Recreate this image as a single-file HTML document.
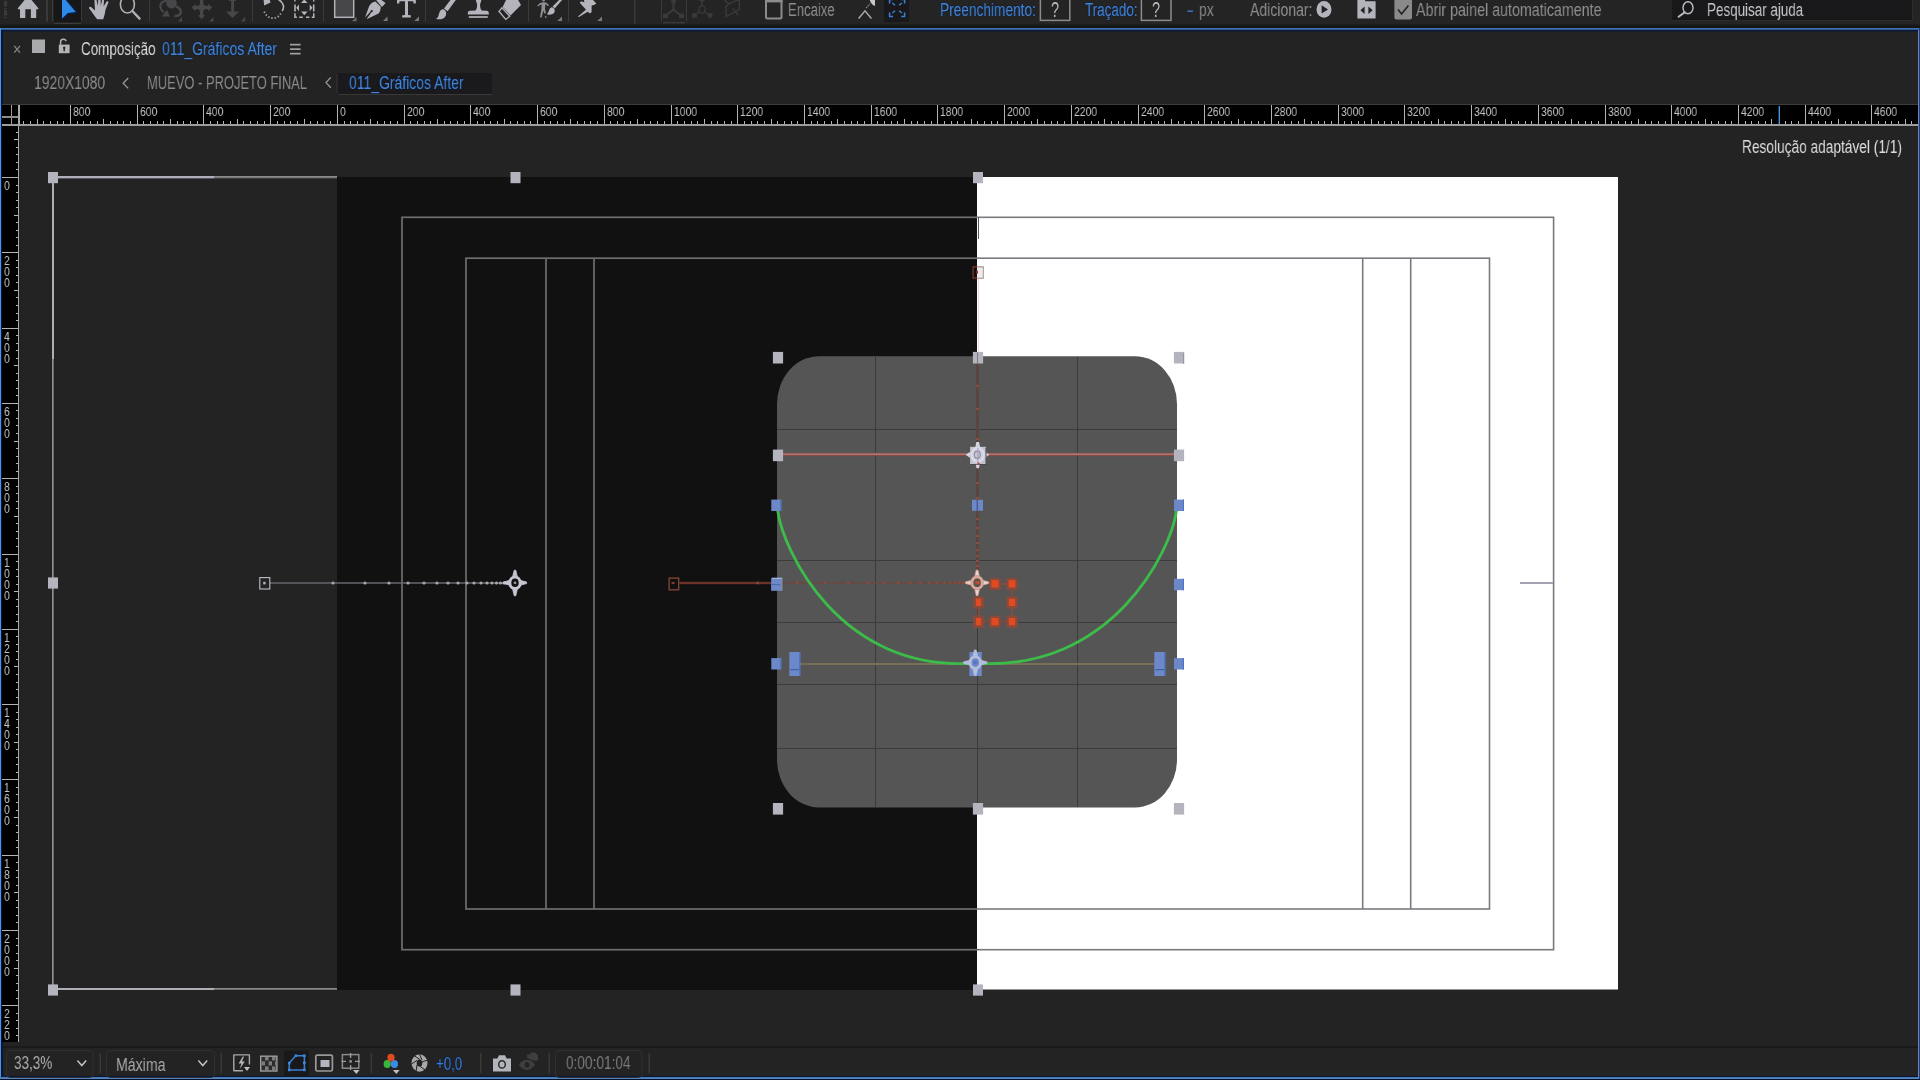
<!DOCTYPE html>
<html>
<head>
<meta charset="utf-8">
<title>After Effects - Composição</title>
<style>
html,body{margin:0;padding:0;}
body{width:1920px;height:1080px;overflow:hidden;background:#232323;position:relative;font-family:"Liberation Sans",sans-serif;}
.abs{position:absolute;}
.t{position:absolute;white-space:nowrap;transform-origin:0 0;line-height:1;letter-spacing:0;will-change:transform;}
svg{position:absolute;left:0;top:0;overflow:visible;}
</style>
</head>
<body>
<!-- toolbar background + panel frame -->
<div class="abs" style="left:0;top:0;width:1920px;height:25px;background:#242424;"></div>
<div class="abs" style="left:0;top:24px;width:1920px;height:4px;background:linear-gradient(#222222,#17181a 35%,#131313);"></div>
<div class="abs" style="left:0;top:28px;width:1920px;height:1052px;background:#232323;"></div>
<!-- blue focus outline -->
<div class="abs" style="left:0;top:28px;width:1920px;height:1px;background:#4272b2;"></div>
<div class="abs" style="left:0;top:29px;width:1920px;height:1px;background:#30588f;"></div>
<div class="abs" style="left:1px;top:30px;width:1917px;height:1px;background:#08193c;"></div>
<div class="abs" style="left:3px;top:31px;width:1915px;height:1px;background:#181d2a;"></div>
<div class="abs" style="left:0;top:28px;width:1px;height:1051px;background:#4d93e8;"></div>
<div class="abs" style="left:1px;top:30px;width:2px;height:1047px;background:#05173a;"></div>
<div class="abs" style="left:1918px;top:30px;width:1px;height:1049px;background:#6684c4;"></div>
<div class="abs" style="left:1919px;top:28px;width:1px;height:1052px;background:#2a3c6c;"></div>
<div class="abs" style="left:1px;top:1076px;width:1917px;height:1px;background:#06183a;"></div>
<div class="abs" style="left:0;top:1077px;width:1919px;height:1px;background:#4a7ab2;"></div>
<div class="abs" style="left:0;top:1078px;width:1919px;height:1px;background:#5585b8;"></div>
<div class="abs" style="left:0;top:1079px;width:1920px;height:1px;background:#041230;"></div>
<!-- rulers -->

<div class="abs" style="left:2px;top:104px;width:1916px;height:1px;background:#3d3d3d;"></div>
<div class="abs" style="left:2px;top:105px;width:1916px;height:19px;background:#000;"></div>
<div class="abs" style="left:2px;top:124px;width:16px;height:918px;background:#000;"></div>
<svg width="1920" height="1080" viewBox="0 0 1920 1080" shape-rendering="crispEdges"><rect x="23" y="121" width="1" height="3" fill="#b4b4b4"/><rect x="30" y="121" width="1" height="3" fill="#b4b4b4"/><rect x="37" y="119" width="1" height="5" fill="#b4b4b4"/><rect x="43" y="121" width="1" height="3" fill="#b4b4b4"/><rect x="50" y="121" width="1" height="3" fill="#b4b4b4"/><rect x="57" y="121" width="1" height="3" fill="#b4b4b4"/><rect x="63" y="121" width="1" height="3" fill="#b4b4b4"/><rect x="70" y="105" width="1" height="19" fill="#b4b4b4"/><rect x="77" y="121" width="1" height="3" fill="#b4b4b4"/><rect x="83" y="121" width="1" height="3" fill="#b4b4b4"/><rect x="90" y="121" width="1" height="3" fill="#b4b4b4"/><rect x="97" y="121" width="1" height="3" fill="#b4b4b4"/><rect x="103" y="119" width="1" height="5" fill="#b4b4b4"/><rect x="110" y="121" width="1" height="3" fill="#b4b4b4"/><rect x="117" y="121" width="1" height="3" fill="#b4b4b4"/><rect x="123" y="121" width="1" height="3" fill="#b4b4b4"/><rect x="130" y="121" width="1" height="3" fill="#b4b4b4"/><rect x="137" y="105" width="1" height="19" fill="#b4b4b4"/><rect x="143" y="121" width="1" height="3" fill="#b4b4b4"/><rect x="150" y="121" width="1" height="3" fill="#b4b4b4"/><rect x="157" y="121" width="1" height="3" fill="#b4b4b4"/><rect x="163" y="121" width="1" height="3" fill="#b4b4b4"/><rect x="170" y="119" width="1" height="5" fill="#b4b4b4"/><rect x="177" y="121" width="1" height="3" fill="#b4b4b4"/><rect x="183" y="121" width="1" height="3" fill="#b4b4b4"/><rect x="190" y="121" width="1" height="3" fill="#b4b4b4"/><rect x="197" y="121" width="1" height="3" fill="#b4b4b4"/><rect x="203" y="105" width="1" height="19" fill="#b4b4b4"/><rect x="210" y="121" width="1" height="3" fill="#b4b4b4"/><rect x="217" y="121" width="1" height="3" fill="#b4b4b4"/><rect x="223" y="121" width="1" height="3" fill="#b4b4b4"/><rect x="230" y="121" width="1" height="3" fill="#b4b4b4"/><rect x="237" y="119" width="1" height="5" fill="#b4b4b4"/><rect x="243" y="121" width="1" height="3" fill="#b4b4b4"/><rect x="250" y="121" width="1" height="3" fill="#b4b4b4"/><rect x="257" y="121" width="1" height="3" fill="#b4b4b4"/><rect x="264" y="121" width="1" height="3" fill="#b4b4b4"/><rect x="270" y="105" width="1" height="19" fill="#b4b4b4"/><rect x="277" y="121" width="1" height="3" fill="#b4b4b4"/><rect x="284" y="121" width="1" height="3" fill="#b4b4b4"/><rect x="290" y="121" width="1" height="3" fill="#b4b4b4"/><rect x="297" y="121" width="1" height="3" fill="#b4b4b4"/><rect x="304" y="119" width="1" height="5" fill="#b4b4b4"/><rect x="310" y="121" width="1" height="3" fill="#b4b4b4"/><rect x="317" y="121" width="1" height="3" fill="#b4b4b4"/><rect x="324" y="121" width="1" height="3" fill="#b4b4b4"/><rect x="330" y="121" width="1" height="3" fill="#b4b4b4"/><rect x="337" y="105" width="1" height="19" fill="#b4b4b4"/><rect x="344" y="121" width="1" height="3" fill="#b4b4b4"/><rect x="350" y="121" width="1" height="3" fill="#b4b4b4"/><rect x="357" y="121" width="1" height="3" fill="#b4b4b4"/><rect x="364" y="121" width="1" height="3" fill="#b4b4b4"/><rect x="370" y="119" width="1" height="5" fill="#b4b4b4"/><rect x="377" y="121" width="1" height="3" fill="#b4b4b4"/><rect x="384" y="121" width="1" height="3" fill="#b4b4b4"/><rect x="390" y="121" width="1" height="3" fill="#b4b4b4"/><rect x="397" y="121" width="1" height="3" fill="#b4b4b4"/><rect x="404" y="105" width="1" height="19" fill="#b4b4b4"/><rect x="410" y="121" width="1" height="3" fill="#b4b4b4"/><rect x="417" y="121" width="1" height="3" fill="#b4b4b4"/><rect x="424" y="121" width="1" height="3" fill="#b4b4b4"/><rect x="430" y="121" width="1" height="3" fill="#b4b4b4"/><rect x="437" y="119" width="1" height="5" fill="#b4b4b4"/><rect x="444" y="121" width="1" height="3" fill="#b4b4b4"/><rect x="450" y="121" width="1" height="3" fill="#b4b4b4"/><rect x="457" y="121" width="1" height="3" fill="#b4b4b4"/><rect x="464" y="121" width="1" height="3" fill="#b4b4b4"/><rect x="470" y="105" width="1" height="19" fill="#b4b4b4"/><rect x="477" y="121" width="1" height="3" fill="#b4b4b4"/><rect x="484" y="121" width="1" height="3" fill="#b4b4b4"/><rect x="490" y="121" width="1" height="3" fill="#b4b4b4"/><rect x="497" y="121" width="1" height="3" fill="#b4b4b4"/><rect x="504" y="119" width="1" height="5" fill="#b4b4b4"/><rect x="510" y="121" width="1" height="3" fill="#b4b4b4"/><rect x="517" y="121" width="1" height="3" fill="#b4b4b4"/><rect x="524" y="121" width="1" height="3" fill="#b4b4b4"/><rect x="530" y="121" width="1" height="3" fill="#b4b4b4"/><rect x="537" y="105" width="1" height="19" fill="#b4b4b4"/><rect x="544" y="121" width="1" height="3" fill="#b4b4b4"/><rect x="550" y="121" width="1" height="3" fill="#b4b4b4"/><rect x="557" y="121" width="1" height="3" fill="#b4b4b4"/><rect x="564" y="121" width="1" height="3" fill="#b4b4b4"/><rect x="570" y="119" width="1" height="5" fill="#b4b4b4"/><rect x="577" y="121" width="1" height="3" fill="#b4b4b4"/><rect x="584" y="121" width="1" height="3" fill="#b4b4b4"/><rect x="590" y="121" width="1" height="3" fill="#b4b4b4"/><rect x="597" y="121" width="1" height="3" fill="#b4b4b4"/><rect x="604" y="105" width="1" height="19" fill="#b4b4b4"/><rect x="610" y="121" width="1" height="3" fill="#b4b4b4"/><rect x="617" y="121" width="1" height="3" fill="#b4b4b4"/><rect x="624" y="121" width="1" height="3" fill="#b4b4b4"/><rect x="630" y="121" width="1" height="3" fill="#b4b4b4"/><rect x="637" y="119" width="1" height="5" fill="#b4b4b4"/><rect x="644" y="121" width="1" height="3" fill="#b4b4b4"/><rect x="650" y="121" width="1" height="3" fill="#b4b4b4"/><rect x="657" y="121" width="1" height="3" fill="#b4b4b4"/><rect x="664" y="121" width="1" height="3" fill="#b4b4b4"/><rect x="671" y="105" width="1" height="19" fill="#b4b4b4"/><rect x="677" y="121" width="1" height="3" fill="#b4b4b4"/><rect x="684" y="121" width="1" height="3" fill="#b4b4b4"/><rect x="691" y="121" width="1" height="3" fill="#b4b4b4"/><rect x="697" y="121" width="1" height="3" fill="#b4b4b4"/><rect x="704" y="119" width="1" height="5" fill="#b4b4b4"/><rect x="711" y="121" width="1" height="3" fill="#b4b4b4"/><rect x="717" y="121" width="1" height="3" fill="#b4b4b4"/><rect x="724" y="121" width="1" height="3" fill="#b4b4b4"/><rect x="731" y="121" width="1" height="3" fill="#b4b4b4"/><rect x="737" y="105" width="1" height="19" fill="#b4b4b4"/><rect x="744" y="121" width="1" height="3" fill="#b4b4b4"/><rect x="751" y="121" width="1" height="3" fill="#b4b4b4"/><rect x="757" y="121" width="1" height="3" fill="#b4b4b4"/><rect x="764" y="121" width="1" height="3" fill="#b4b4b4"/><rect x="771" y="119" width="1" height="5" fill="#b4b4b4"/><rect x="777" y="121" width="1" height="3" fill="#b4b4b4"/><rect x="784" y="121" width="1" height="3" fill="#b4b4b4"/><rect x="791" y="121" width="1" height="3" fill="#b4b4b4"/><rect x="797" y="121" width="1" height="3" fill="#b4b4b4"/><rect x="804" y="105" width="1" height="19" fill="#b4b4b4"/><rect x="811" y="121" width="1" height="3" fill="#b4b4b4"/><rect x="817" y="121" width="1" height="3" fill="#b4b4b4"/><rect x="824" y="121" width="1" height="3" fill="#b4b4b4"/><rect x="831" y="121" width="1" height="3" fill="#b4b4b4"/><rect x="837" y="119" width="1" height="5" fill="#b4b4b4"/><rect x="844" y="121" width="1" height="3" fill="#b4b4b4"/><rect x="851" y="121" width="1" height="3" fill="#b4b4b4"/><rect x="857" y="121" width="1" height="3" fill="#b4b4b4"/><rect x="864" y="121" width="1" height="3" fill="#b4b4b4"/><rect x="871" y="105" width="1" height="19" fill="#b4b4b4"/><rect x="877" y="121" width="1" height="3" fill="#b4b4b4"/><rect x="884" y="121" width="1" height="3" fill="#b4b4b4"/><rect x="891" y="121" width="1" height="3" fill="#b4b4b4"/><rect x="897" y="121" width="1" height="3" fill="#b4b4b4"/><rect x="904" y="119" width="1" height="5" fill="#b4b4b4"/><rect x="911" y="121" width="1" height="3" fill="#b4b4b4"/><rect x="917" y="121" width="1" height="3" fill="#b4b4b4"/><rect x="924" y="121" width="1" height="3" fill="#b4b4b4"/><rect x="931" y="121" width="1" height="3" fill="#b4b4b4"/><rect x="937" y="105" width="1" height="19" fill="#b4b4b4"/><rect x="944" y="121" width="1" height="3" fill="#b4b4b4"/><rect x="951" y="121" width="1" height="3" fill="#b4b4b4"/><rect x="957" y="121" width="1" height="3" fill="#b4b4b4"/><rect x="964" y="121" width="1" height="3" fill="#b4b4b4"/><rect x="971" y="119" width="1" height="5" fill="#b4b4b4"/><rect x="977" y="121" width="1" height="3" fill="#b4b4b4"/><rect x="984" y="121" width="1" height="3" fill="#b4b4b4"/><rect x="991" y="121" width="1" height="3" fill="#b4b4b4"/><rect x="997" y="121" width="1" height="3" fill="#b4b4b4"/><rect x="1004" y="105" width="1" height="19" fill="#b4b4b4"/><rect x="1011" y="121" width="1" height="3" fill="#b4b4b4"/><rect x="1017" y="121" width="1" height="3" fill="#b4b4b4"/><rect x="1024" y="121" width="1" height="3" fill="#b4b4b4"/><rect x="1031" y="121" width="1" height="3" fill="#b4b4b4"/><rect x="1037" y="119" width="1" height="5" fill="#b4b4b4"/><rect x="1044" y="121" width="1" height="3" fill="#b4b4b4"/><rect x="1051" y="121" width="1" height="3" fill="#b4b4b4"/><rect x="1057" y="121" width="1" height="3" fill="#b4b4b4"/><rect x="1064" y="121" width="1" height="3" fill="#b4b4b4"/><rect x="1071" y="105" width="1" height="19" fill="#b4b4b4"/><rect x="1077" y="121" width="1" height="3" fill="#b4b4b4"/><rect x="1084" y="121" width="1" height="3" fill="#b4b4b4"/><rect x="1091" y="121" width="1" height="3" fill="#b4b4b4"/><rect x="1098" y="121" width="1" height="3" fill="#b4b4b4"/><rect x="1104" y="119" width="1" height="5" fill="#b4b4b4"/><rect x="1111" y="121" width="1" height="3" fill="#b4b4b4"/><rect x="1118" y="121" width="1" height="3" fill="#b4b4b4"/><rect x="1124" y="121" width="1" height="3" fill="#b4b4b4"/><rect x="1131" y="121" width="1" height="3" fill="#b4b4b4"/><rect x="1138" y="105" width="1" height="19" fill="#b4b4b4"/><rect x="1144" y="121" width="1" height="3" fill="#b4b4b4"/><rect x="1151" y="121" width="1" height="3" fill="#b4b4b4"/><rect x="1158" y="121" width="1" height="3" fill="#b4b4b4"/><rect x="1164" y="121" width="1" height="3" fill="#b4b4b4"/><rect x="1171" y="119" width="1" height="5" fill="#b4b4b4"/><rect x="1178" y="121" width="1" height="3" fill="#b4b4b4"/><rect x="1184" y="121" width="1" height="3" fill="#b4b4b4"/><rect x="1191" y="121" width="1" height="3" fill="#b4b4b4"/><rect x="1198" y="121" width="1" height="3" fill="#b4b4b4"/><rect x="1204" y="105" width="1" height="19" fill="#b4b4b4"/><rect x="1211" y="121" width="1" height="3" fill="#b4b4b4"/><rect x="1218" y="121" width="1" height="3" fill="#b4b4b4"/><rect x="1224" y="121" width="1" height="3" fill="#b4b4b4"/><rect x="1231" y="121" width="1" height="3" fill="#b4b4b4"/><rect x="1238" y="119" width="1" height="5" fill="#b4b4b4"/><rect x="1244" y="121" width="1" height="3" fill="#b4b4b4"/><rect x="1251" y="121" width="1" height="3" fill="#b4b4b4"/><rect x="1258" y="121" width="1" height="3" fill="#b4b4b4"/><rect x="1264" y="121" width="1" height="3" fill="#b4b4b4"/><rect x="1271" y="105" width="1" height="19" fill="#b4b4b4"/><rect x="1278" y="121" width="1" height="3" fill="#b4b4b4"/><rect x="1284" y="121" width="1" height="3" fill="#b4b4b4"/><rect x="1291" y="121" width="1" height="3" fill="#b4b4b4"/><rect x="1298" y="121" width="1" height="3" fill="#b4b4b4"/><rect x="1304" y="119" width="1" height="5" fill="#b4b4b4"/><rect x="1311" y="121" width="1" height="3" fill="#b4b4b4"/><rect x="1318" y="121" width="1" height="3" fill="#b4b4b4"/><rect x="1324" y="121" width="1" height="3" fill="#b4b4b4"/><rect x="1331" y="121" width="1" height="3" fill="#b4b4b4"/><rect x="1338" y="105" width="1" height="19" fill="#b4b4b4"/><rect x="1344" y="121" width="1" height="3" fill="#b4b4b4"/><rect x="1351" y="121" width="1" height="3" fill="#b4b4b4"/><rect x="1358" y="121" width="1" height="3" fill="#b4b4b4"/><rect x="1364" y="121" width="1" height="3" fill="#b4b4b4"/><rect x="1371" y="119" width="1" height="5" fill="#b4b4b4"/><rect x="1378" y="121" width="1" height="3" fill="#b4b4b4"/><rect x="1384" y="121" width="1" height="3" fill="#b4b4b4"/><rect x="1391" y="121" width="1" height="3" fill="#b4b4b4"/><rect x="1398" y="121" width="1" height="3" fill="#b4b4b4"/><rect x="1404" y="105" width="1" height="19" fill="#b4b4b4"/><rect x="1411" y="121" width="1" height="3" fill="#b4b4b4"/><rect x="1418" y="121" width="1" height="3" fill="#b4b4b4"/><rect x="1424" y="121" width="1" height="3" fill="#b4b4b4"/><rect x="1431" y="121" width="1" height="3" fill="#b4b4b4"/><rect x="1438" y="119" width="1" height="5" fill="#b4b4b4"/><rect x="1444" y="121" width="1" height="3" fill="#b4b4b4"/><rect x="1451" y="121" width="1" height="3" fill="#b4b4b4"/><rect x="1458" y="121" width="1" height="3" fill="#b4b4b4"/><rect x="1464" y="121" width="1" height="3" fill="#b4b4b4"/><rect x="1471" y="105" width="1" height="19" fill="#b4b4b4"/><rect x="1478" y="121" width="1" height="3" fill="#b4b4b4"/><rect x="1484" y="121" width="1" height="3" fill="#b4b4b4"/><rect x="1491" y="121" width="1" height="3" fill="#b4b4b4"/><rect x="1498" y="121" width="1" height="3" fill="#b4b4b4"/><rect x="1505" y="119" width="1" height="5" fill="#b4b4b4"/><rect x="1511" y="121" width="1" height="3" fill="#b4b4b4"/><rect x="1518" y="121" width="1" height="3" fill="#b4b4b4"/><rect x="1525" y="121" width="1" height="3" fill="#b4b4b4"/><rect x="1531" y="121" width="1" height="3" fill="#b4b4b4"/><rect x="1538" y="105" width="1" height="19" fill="#b4b4b4"/><rect x="1545" y="121" width="1" height="3" fill="#b4b4b4"/><rect x="1551" y="121" width="1" height="3" fill="#b4b4b4"/><rect x="1558" y="121" width="1" height="3" fill="#b4b4b4"/><rect x="1565" y="121" width="1" height="3" fill="#b4b4b4"/><rect x="1571" y="119" width="1" height="5" fill="#b4b4b4"/><rect x="1578" y="121" width="1" height="3" fill="#b4b4b4"/><rect x="1585" y="121" width="1" height="3" fill="#b4b4b4"/><rect x="1591" y="121" width="1" height="3" fill="#b4b4b4"/><rect x="1598" y="121" width="1" height="3" fill="#b4b4b4"/><rect x="1605" y="105" width="1" height="19" fill="#b4b4b4"/><rect x="1611" y="121" width="1" height="3" fill="#b4b4b4"/><rect x="1618" y="121" width="1" height="3" fill="#b4b4b4"/><rect x="1625" y="121" width="1" height="3" fill="#b4b4b4"/><rect x="1631" y="121" width="1" height="3" fill="#b4b4b4"/><rect x="1638" y="119" width="1" height="5" fill="#b4b4b4"/><rect x="1645" y="121" width="1" height="3" fill="#b4b4b4"/><rect x="1651" y="121" width="1" height="3" fill="#b4b4b4"/><rect x="1658" y="121" width="1" height="3" fill="#b4b4b4"/><rect x="1665" y="121" width="1" height="3" fill="#b4b4b4"/><rect x="1671" y="105" width="1" height="19" fill="#b4b4b4"/><rect x="1678" y="121" width="1" height="3" fill="#b4b4b4"/><rect x="1685" y="121" width="1" height="3" fill="#b4b4b4"/><rect x="1691" y="121" width="1" height="3" fill="#b4b4b4"/><rect x="1698" y="121" width="1" height="3" fill="#b4b4b4"/><rect x="1705" y="119" width="1" height="5" fill="#b4b4b4"/><rect x="1711" y="121" width="1" height="3" fill="#b4b4b4"/><rect x="1718" y="121" width="1" height="3" fill="#b4b4b4"/><rect x="1725" y="121" width="1" height="3" fill="#b4b4b4"/><rect x="1731" y="121" width="1" height="3" fill="#b4b4b4"/><rect x="1738" y="105" width="1" height="19" fill="#b4b4b4"/><rect x="1745" y="121" width="1" height="3" fill="#b4b4b4"/><rect x="1751" y="121" width="1" height="3" fill="#b4b4b4"/><rect x="1758" y="121" width="1" height="3" fill="#b4b4b4"/><rect x="1765" y="121" width="1" height="3" fill="#b4b4b4"/><rect x="1771" y="119" width="1" height="5" fill="#b4b4b4"/><rect x="1778" y="121" width="1" height="3" fill="#b4b4b4"/><rect x="1785" y="121" width="1" height="3" fill="#b4b4b4"/><rect x="1791" y="121" width="1" height="3" fill="#b4b4b4"/><rect x="1798" y="121" width="1" height="3" fill="#b4b4b4"/><rect x="1805" y="105" width="1" height="19" fill="#b4b4b4"/><rect x="1811" y="121" width="1" height="3" fill="#b4b4b4"/><rect x="1818" y="121" width="1" height="3" fill="#b4b4b4"/><rect x="1825" y="121" width="1" height="3" fill="#b4b4b4"/><rect x="1831" y="121" width="1" height="3" fill="#b4b4b4"/><rect x="1838" y="119" width="1" height="5" fill="#b4b4b4"/><rect x="1845" y="121" width="1" height="3" fill="#b4b4b4"/><rect x="1851" y="121" width="1" height="3" fill="#b4b4b4"/><rect x="1858" y="121" width="1" height="3" fill="#b4b4b4"/><rect x="1865" y="121" width="1" height="3" fill="#b4b4b4"/><rect x="1871" y="105" width="1" height="19" fill="#b4b4b4"/><rect x="1878" y="121" width="1" height="3" fill="#b4b4b4"/><rect x="1885" y="121" width="1" height="3" fill="#b4b4b4"/><rect x="1891" y="121" width="1" height="3" fill="#b4b4b4"/><rect x="1898" y="121" width="1" height="3" fill="#b4b4b4"/><rect x="1905" y="119" width="1" height="5" fill="#b4b4b4"/><rect x="1911" y="121" width="1" height="3" fill="#b4b4b4"/><rect x="2" y="124" width="1916" height="2" fill="#9c9c9c"/><rect x="18" y="105" width="2" height="21" fill="#a8a8a8"/><rect x="11" y="105" width="1" height="19" fill="#9c9c9c"/><rect x="2" y="116" width="16" height="2" fill="#8c8c8c"/><rect x="16" y="132" width="2" height="1" fill="#b4b4b4"/><rect x="14" y="139" width="4" height="1" fill="#b4b4b4"/><rect x="16" y="147" width="2" height="1" fill="#b4b4b4"/><rect x="16" y="154" width="2" height="1" fill="#b4b4b4"/><rect x="16" y="162" width="2" height="1" fill="#b4b4b4"/><rect x="16" y="169" width="2" height="1" fill="#b4b4b4"/><rect x="2" y="177" width="16" height="1" fill="#b4b4b4"/><rect x="16" y="185" width="2" height="1" fill="#b4b4b4"/><rect x="16" y="192" width="2" height="1" fill="#b4b4b4"/><rect x="16" y="200" width="2" height="1" fill="#b4b4b4"/><rect x="16" y="207" width="2" height="1" fill="#b4b4b4"/><rect x="14" y="215" width="4" height="1" fill="#b4b4b4"/><rect x="16" y="222" width="2" height="1" fill="#b4b4b4"/><rect x="16" y="230" width="2" height="1" fill="#b4b4b4"/><rect x="16" y="237" width="2" height="1" fill="#b4b4b4"/><rect x="16" y="245" width="2" height="1" fill="#b4b4b4"/><rect x="2" y="252" width="16" height="1" fill="#b4b4b4"/><rect x="16" y="260" width="2" height="1" fill="#b4b4b4"/><rect x="16" y="267" width="2" height="1" fill="#b4b4b4"/><rect x="16" y="275" width="2" height="1" fill="#b4b4b4"/><rect x="16" y="282" width="2" height="1" fill="#b4b4b4"/><rect x="14" y="290" width="4" height="1" fill="#b4b4b4"/><rect x="16" y="297" width="2" height="1" fill="#b4b4b4"/><rect x="16" y="305" width="2" height="1" fill="#b4b4b4"/><rect x="16" y="313" width="2" height="1" fill="#b4b4b4"/><rect x="16" y="320" width="2" height="1" fill="#b4b4b4"/><rect x="2" y="328" width="16" height="1" fill="#b4b4b4"/><rect x="16" y="335" width="2" height="1" fill="#b4b4b4"/><rect x="16" y="343" width="2" height="1" fill="#b4b4b4"/><rect x="16" y="350" width="2" height="1" fill="#b4b4b4"/><rect x="16" y="358" width="2" height="1" fill="#b4b4b4"/><rect x="14" y="365" width="4" height="1" fill="#b4b4b4"/><rect x="16" y="373" width="2" height="1" fill="#b4b4b4"/><rect x="16" y="380" width="2" height="1" fill="#b4b4b4"/><rect x="16" y="388" width="2" height="1" fill="#b4b4b4"/><rect x="16" y="395" width="2" height="1" fill="#b4b4b4"/><rect x="2" y="403" width="16" height="1" fill="#b4b4b4"/><rect x="16" y="410" width="2" height="1" fill="#b4b4b4"/><rect x="16" y="418" width="2" height="1" fill="#b4b4b4"/><rect x="16" y="425" width="2" height="1" fill="#b4b4b4"/><rect x="16" y="433" width="2" height="1" fill="#b4b4b4"/><rect x="14" y="441" width="4" height="1" fill="#b4b4b4"/><rect x="16" y="448" width="2" height="1" fill="#b4b4b4"/><rect x="16" y="456" width="2" height="1" fill="#b4b4b4"/><rect x="16" y="463" width="2" height="1" fill="#b4b4b4"/><rect x="16" y="471" width="2" height="1" fill="#b4b4b4"/><rect x="2" y="478" width="16" height="1" fill="#b4b4b4"/><rect x="16" y="486" width="2" height="1" fill="#b4b4b4"/><rect x="16" y="493" width="2" height="1" fill="#b4b4b4"/><rect x="16" y="501" width="2" height="1" fill="#b4b4b4"/><rect x="16" y="508" width="2" height="1" fill="#b4b4b4"/><rect x="14" y="516" width="4" height="1" fill="#b4b4b4"/><rect x="16" y="523" width="2" height="1" fill="#b4b4b4"/><rect x="16" y="531" width="2" height="1" fill="#b4b4b4"/><rect x="16" y="538" width="2" height="1" fill="#b4b4b4"/><rect x="16" y="546" width="2" height="1" fill="#b4b4b4"/><rect x="2" y="554" width="16" height="1" fill="#b4b4b4"/><rect x="16" y="561" width="2" height="1" fill="#b4b4b4"/><rect x="16" y="569" width="2" height="1" fill="#b4b4b4"/><rect x="16" y="576" width="2" height="1" fill="#b4b4b4"/><rect x="16" y="584" width="2" height="1" fill="#b4b4b4"/><rect x="14" y="591" width="4" height="1" fill="#b4b4b4"/><rect x="16" y="599" width="2" height="1" fill="#b4b4b4"/><rect x="16" y="606" width="2" height="1" fill="#b4b4b4"/><rect x="16" y="614" width="2" height="1" fill="#b4b4b4"/><rect x="16" y="621" width="2" height="1" fill="#b4b4b4"/><rect x="2" y="629" width="16" height="1" fill="#b4b4b4"/><rect x="16" y="636" width="2" height="1" fill="#b4b4b4"/><rect x="16" y="644" width="2" height="1" fill="#b4b4b4"/><rect x="16" y="651" width="2" height="1" fill="#b4b4b4"/><rect x="16" y="659" width="2" height="1" fill="#b4b4b4"/><rect x="14" y="666" width="4" height="1" fill="#b4b4b4"/><rect x="16" y="674" width="2" height="1" fill="#b4b4b4"/><rect x="16" y="682" width="2" height="1" fill="#b4b4b4"/><rect x="16" y="689" width="2" height="1" fill="#b4b4b4"/><rect x="16" y="697" width="2" height="1" fill="#b4b4b4"/><rect x="2" y="704" width="16" height="1" fill="#b4b4b4"/><rect x="16" y="712" width="2" height="1" fill="#b4b4b4"/><rect x="16" y="719" width="2" height="1" fill="#b4b4b4"/><rect x="16" y="727" width="2" height="1" fill="#b4b4b4"/><rect x="16" y="734" width="2" height="1" fill="#b4b4b4"/><rect x="14" y="742" width="4" height="1" fill="#b4b4b4"/><rect x="16" y="749" width="2" height="1" fill="#b4b4b4"/><rect x="16" y="757" width="2" height="1" fill="#b4b4b4"/><rect x="16" y="764" width="2" height="1" fill="#b4b4b4"/><rect x="16" y="772" width="2" height="1" fill="#b4b4b4"/><rect x="2" y="779" width="16" height="1" fill="#b4b4b4"/><rect x="16" y="787" width="2" height="1" fill="#b4b4b4"/><rect x="16" y="794" width="2" height="1" fill="#b4b4b4"/><rect x="16" y="802" width="2" height="1" fill="#b4b4b4"/><rect x="16" y="810" width="2" height="1" fill="#b4b4b4"/><rect x="14" y="817" width="4" height="1" fill="#b4b4b4"/><rect x="16" y="825" width="2" height="1" fill="#b4b4b4"/><rect x="16" y="832" width="2" height="1" fill="#b4b4b4"/><rect x="16" y="840" width="2" height="1" fill="#b4b4b4"/><rect x="16" y="847" width="2" height="1" fill="#b4b4b4"/><rect x="2" y="855" width="16" height="1" fill="#b4b4b4"/><rect x="16" y="862" width="2" height="1" fill="#b4b4b4"/><rect x="16" y="870" width="2" height="1" fill="#b4b4b4"/><rect x="16" y="877" width="2" height="1" fill="#b4b4b4"/><rect x="16" y="885" width="2" height="1" fill="#b4b4b4"/><rect x="14" y="892" width="4" height="1" fill="#b4b4b4"/><rect x="16" y="900" width="2" height="1" fill="#b4b4b4"/><rect x="16" y="907" width="2" height="1" fill="#b4b4b4"/><rect x="16" y="915" width="2" height="1" fill="#b4b4b4"/><rect x="16" y="922" width="2" height="1" fill="#b4b4b4"/><rect x="2" y="930" width="16" height="1" fill="#b4b4b4"/><rect x="16" y="938" width="2" height="1" fill="#b4b4b4"/><rect x="16" y="945" width="2" height="1" fill="#b4b4b4"/><rect x="16" y="953" width="2" height="1" fill="#b4b4b4"/><rect x="16" y="960" width="2" height="1" fill="#b4b4b4"/><rect x="14" y="968" width="4" height="1" fill="#b4b4b4"/><rect x="16" y="975" width="2" height="1" fill="#b4b4b4"/><rect x="16" y="983" width="2" height="1" fill="#b4b4b4"/><rect x="16" y="990" width="2" height="1" fill="#b4b4b4"/><rect x="16" y="998" width="2" height="1" fill="#b4b4b4"/><rect x="2" y="1005" width="16" height="1" fill="#b4b4b4"/><rect x="16" y="1013" width="2" height="1" fill="#b4b4b4"/><rect x="16" y="1020" width="2" height="1" fill="#b4b4b4"/><rect x="16" y="1028" width="2" height="1" fill="#b4b4b4"/><rect x="16" y="1035" width="2" height="1" fill="#b4b4b4"/><rect x="18" y="126" width="1" height="916" fill="#a8a8a8"/><rect x="1779" y="106" width="1" height="18" fill="#4a90d9"/><rect x="1778" y="106" width="1" height="18" fill="#163a66"/></svg>
<style>.rl{font-size:13px;color:#c4c4c4;transform:scaleX(0.8);}</style>
<span class="t rl" style="left:73px;top:105.2px;">800</span><span class="t rl" style="left:140px;top:105.2px;">600</span><span class="t rl" style="left:206px;top:105.2px;">400</span><span class="t rl" style="left:273px;top:105.2px;">200</span><span class="t rl" style="left:340px;top:105.2px;">0</span><span class="t rl" style="left:407px;top:105.2px;">200</span><span class="t rl" style="left:473px;top:105.2px;">400</span><span class="t rl" style="left:540px;top:105.2px;">600</span><span class="t rl" style="left:607px;top:105.2px;">800</span><span class="t rl" style="left:674px;top:105.2px;">1000</span><span class="t rl" style="left:740px;top:105.2px;">1200</span><span class="t rl" style="left:807px;top:105.2px;">1400</span><span class="t rl" style="left:874px;top:105.2px;">1600</span><span class="t rl" style="left:940px;top:105.2px;">1800</span><span class="t rl" style="left:1007px;top:105.2px;">2000</span><span class="t rl" style="left:1074px;top:105.2px;">2200</span><span class="t rl" style="left:1141px;top:105.2px;">2400</span><span class="t rl" style="left:1207px;top:105.2px;">2600</span><span class="t rl" style="left:1274px;top:105.2px;">2800</span><span class="t rl" style="left:1341px;top:105.2px;">3000</span><span class="t rl" style="left:1407px;top:105.2px;">3200</span><span class="t rl" style="left:1474px;top:105.2px;">3400</span><span class="t rl" style="left:1541px;top:105.2px;">3600</span><span class="t rl" style="left:1608px;top:105.2px;">3800</span><span class="t rl" style="left:1674px;top:105.2px;">4000</span><span class="t rl" style="left:1741px;top:105.2px;">4200</span><span class="t rl" style="left:1808px;top:105.2px;">4400</span><span class="t rl" style="left:1874px;top:105.2px;">4600</span><span class="t rl" style="left:4px;top:178.8px;">0</span><span class="t rl" style="left:4px;top:253.8px;">2</span><span class="t rl" style="left:4px;top:264.8px;">0</span><span class="t rl" style="left:4px;top:275.8px;">0</span><span class="t rl" style="left:4px;top:329.8px;">4</span><span class="t rl" style="left:4px;top:340.8px;">0</span><span class="t rl" style="left:4px;top:351.8px;">0</span><span class="t rl" style="left:4px;top:404.8px;">6</span><span class="t rl" style="left:4px;top:415.8px;">0</span><span class="t rl" style="left:4px;top:426.8px;">0</span><span class="t rl" style="left:4px;top:479.8px;">8</span><span class="t rl" style="left:4px;top:490.8px;">0</span><span class="t rl" style="left:4px;top:501.8px;">0</span><span class="t rl" style="left:4px;top:555.8px;">1</span><span class="t rl" style="left:4px;top:566.8px;">0</span><span class="t rl" style="left:4px;top:577.8px;">0</span><span class="t rl" style="left:4px;top:588.8px;">0</span><span class="t rl" style="left:4px;top:630.8px;">1</span><span class="t rl" style="left:4px;top:641.8px;">2</span><span class="t rl" style="left:4px;top:652.8px;">0</span><span class="t rl" style="left:4px;top:663.8px;">0</span><span class="t rl" style="left:4px;top:705.8px;">1</span><span class="t rl" style="left:4px;top:716.8px;">4</span><span class="t rl" style="left:4px;top:727.8px;">0</span><span class="t rl" style="left:4px;top:738.8px;">0</span><span class="t rl" style="left:4px;top:780.8px;">1</span><span class="t rl" style="left:4px;top:791.8px;">6</span><span class="t rl" style="left:4px;top:802.8px;">0</span><span class="t rl" style="left:4px;top:813.8px;">0</span><span class="t rl" style="left:4px;top:856.8px;">1</span><span class="t rl" style="left:4px;top:867.8px;">8</span><span class="t rl" style="left:4px;top:878.8px;">0</span><span class="t rl" style="left:4px;top:889.8px;">0</span><span class="t rl" style="left:4px;top:931.8px;">2</span><span class="t rl" style="left:4px;top:942.8px;">0</span><span class="t rl" style="left:4px;top:953.8px;">0</span><span class="t rl" style="left:4px;top:964.8px;">0</span><span class="t rl" style="left:4px;top:1006.8px;">2</span><span class="t rl" style="left:4px;top:1017.8px;">2</span><span class="t rl" style="left:4px;top:1028.8px;">0</span>
<!-- ===== top toolbar ===== -->
<div class="abs" style="left:54px;top:0;width:27px;height:22px;background:#17171a;"></div>
<div class="abs" style="left:54px;top:23px;width:27px;height:1px;background:#3c3c3c;"></div>
<div class="abs" style="left:884px;top:0;width:25px;height:22px;background:#19191c;"></div>
<div class="abs" style="left:1672px;top:0;width:241px;height:21px;background:#18181b;border-right:1px solid #2c2c2c;border-bottom:1px solid #2c2c2c;box-sizing:border-box;"></div>
<svg width="1920" height="28" viewBox="0 0 1920 28">
<g fill="#3a3a3c">
 <!-- grip -->
 <rect x="4" y="1" width="3" height="5.5"/><rect x="4" y="8" width="3" height="1"/>
 <rect x="4" y="10" width="3" height="5.5"/><rect x="4" y="17" width="3" height="1"/>
 <!-- separators -->
 <rect x="46" y="0" width="2" height="21.5"/><rect x="52" y="0" width="1" height="21"/>
 <rect x="81" y="0" width="1" height="21.5"/><rect x="149" y="0" width="1" height="21.5"/>
 <rect x="252" y="0" width="1" height="21.5"/><rect x="323" y="0" width="1" height="21.5"/>
 <rect x="425" y="0" width="1" height="21.5"/><rect x="528" y="0" width="1" height="21.5"/>
 <rect x="568" y="0" width="1" height="21.5"/><rect x="634" y="0" width="1.5" height="24"/>
</g>
<g fill="#b4b4bc">
 <!-- home -->
 <path d="M28.1,-4.2 L38.4,8.3 L38.4,9.3 L36.2,9.3 L36.2,18 L30.9,18 L30.9,9.2 L25.3,9.2 L25.3,18 L20,18 L20,9.3 L17.8,9.3 L17.8,8.3 Z"/>
 <!-- hand -->
 <path d="M97.2,19.2 C95,17 92,12 89.2,8.6 C88.6,7.4 89.8,6.2 91,7 L95,10.6 L94.4,0 L96.6,0 L97.6,6 L98.2,0 L100.6,0 L100.8,6 L102,0 L104,0 L103.6,6.6 L106.6,1.6 C107.4,0.6 108.8,1.4 108.4,2.6 L105.6,9.6 C105,13 104.4,16 103.2,19.2 Z"/>
</g>
<!-- selection arrow -->
<path d="M62,-6.4 L62,20.2 L68.5,14.1 L78,13.1 Z" fill="#06204a"/>
<path d="M62,-4.5 L62,18.6 L67.9,13.1 L75.8,12.1 Z" fill="#2f89e8"/>
<!-- zoom -->
<ellipse cx="127.4" cy="4.4" rx="7" ry="8.6" fill="none" stroke="#b0b0b6" stroke-width="1.6"/>
<path d="M132.6,11.2 L139.6,18.6" stroke="#b0b0b6" stroke-width="2.4" stroke-linecap="round"/>
</svg>
<svg width="1920" height="28" viewBox="0 0 1920 28">
<!-- dim tools: orbit, pan, dolly -->
<g fill="#474749" stroke="none">
 <circle cx="171.6" cy="3.4" r="5.2"/>
 <path d="M167.5,1 C160.5,0.5 157.6,7 163.6,12.4" fill="none" stroke="#474749" stroke-width="2.2"/>
 <path d="M161.8,16.6 L170,16.6 L166.8,9.8 Z"/>
 <path d="M176,6.4 C182.2,9 183.2,15.8 174.4,16" fill="none" stroke="#474749" stroke-width="2.5"/>
 <path d="M178,21.5 L182,21.5 L182,17 Z"/>
 <!-- pan cross -->
 <rect x="194.5" y="5.8" width="14.5" height="3.4"/><rect x="199.9" y="-1" width="3.4" height="17"/>
 <path d="M191.5,7.5 L195.6,3.7 L195.6,11.3 Z M212.2,7.5 L208.1,3.7 L208.1,11.3 Z M201.6,19.3 L197.8,15.2 L205.4,15.2 Z"/>
 <path d="M201.6,2.6 L206.4,7.5 L201.6,12.4 L196.8,7.5 Z"/>
 <path d="M209,21.5 L213.5,21.5 L213.5,17 Z"/>
 <!-- dolly arrow -->
 <rect x="229" y="0" width="7" height="1"/>
 <rect x="231.2" y="0" width="2.8" height="12"/>
 <path d="M225.8,11.5 L239,11.5 L232.5,18 Z"/>
 <path d="M241,21.5 L245.2,21.5 L245.2,16.6 Z"/>
</g>
<!-- rotate -->
<g fill="#b4b4bc">
 <path d="M263.6,0 L269.8,0 L270.6,2.6 L264.2,5.6 Z"/>
 <path d="M278.6,-0.5 C284,3 284.5,7.5 282.2,11" fill="none" stroke="#b4b4bc" stroke-width="1.6"/>
 <path d="M264.2,11.6 C266.5,17.5 273,20.5 279,16 L281.6,12.4" fill="none" stroke="#a4a4ac" stroke-width="1.8" stroke-dasharray="1.4,1.9"/>
 <!-- anchor / pan-behind -->
 <path d="M294.2,4.4 h1.6 v7 h-1.6z M299,4.4 L299,11.2 L296.2,7.8 Z"/>
 <path d="M312.9,4.4 h1.6 v7 h-1.6z M309.7,4.4 L309.7,11.2 L312.5,7.8 Z"/>
 <path d="M301,3 L307.6,3 L304.3,-0.6 Z"/>
 <path d="M301,11.6 L307.6,11.6 L304.3,15.2 Z"/>
 <path d="M294.2,0 h1.4 v1.4 h-1.4z M313,0 h1.4 v1.4 h-1.4z"/>
 <path d="M294.2,13.2 h1.5 v3.2 h1.2 v1.6 h-2.7z M314.5,13.2 h-1.5 v3.2 h-1.2 v1.6 h2.7z"/>
 <path d="M299.2,16.4 h3.6 v1.6 h-3.6z M306,16.4 h3.4 v1.6 h-3.4z"/>
</g>
<!-- rect tool -->
<rect x="334.7" y="-3" width="19" height="20.3" fill="#474749" stroke="#b0b0b6" stroke-width="1.5"/>
<path d="M352,21.2 L356.5,21.2 L356.5,16.8 Z" fill="#6a6a6e"/>
<!-- pen -->
<g fill="#b4b4bc">
 <path d="M365,17.6 L369,6.4 C370.5,3.4 373,2 375.4,1.4 L380.8,6.8 C380.6,9.8 380,12 378.6,13.6 L366.6,19.2 L371.4,12.2 C372.8,12.4 373.4,10.6 372.2,10 C371,9.6 370.2,10.6 370.6,11.6 Z"/>
 <path d="M376.4,0.4 L378.6,-2 L385.6,3 L382,7 Z"/>
 <path d="M383,21 L387.5,21 L387.5,16.5 Z" fill="#7a7a80"/>
 <!-- T -->
 <path d="M397,-1 L415.8,-1 L415.8,3.4 L413.6,3.4 L413.2,1.2 L408,1.2 L408,15 L410.8,15.2 L410.8,17.4 L402.2,17.4 L402.2,15.2 L405,15 L405,1.2 L399.6,1.2 L399.2,3.4 L397,3.4 Z"/>
 <path d="M414.2,21 L419,21 L419,16.5 Z" fill="#7a7a80"/>
 <!-- brush -->
 <path d="M451.2,-1 L456.6,-1 L447.6,11.2 L444,8.4 Z"/>
 <path d="M443.2,9.2 C446.5,10.5 447.4,14 444.6,17.4 C442.5,19.5 438.5,19.8 436,18.8 C438.5,17.8 438.6,15 439.4,12.6 C440,10.6 441.5,9 443.2,9.2 Z"/>
 <!-- stamp -->
 <path d="M476,-1 L481.2,-1 C481.6,1 480.6,2.4 480.2,4 C479.9,6 480.2,8.4 481.6,10.4 L486.6,10.8 C488.2,11 488.8,12 488.8,13 L488.8,14.6 L467.8,14.6 L467.8,13 C467.8,12 468.4,11 470,10.8 L475.6,10.4 C477,8.4 477.3,6 477,4 C476.6,2.4 475.6,1 476,-1 Z"/>
 <rect x="468.8" y="16" width="19" height="2" fill="#9c9ca2"/>
 <!-- eraser -->
 <path d="M507,-2 L517,-2 L521,5 L510.5,15.5 L502.6,7 Z"/>
 <path d="M502,7.8 L509.8,16.2 L505.8,19.4 L499,11.4 Z" fill="none" stroke="#b4b4bc" stroke-width="1.3"/>
</g>
<!-- roto brush -->
<g fill="#8e8e94">
 <circle cx="543.6" cy="0.2" r="1.3"/>
 <path d="M537.2,6 C539,2.6 542,2 544,2.2 C546,2.2 548,3.4 549,5.6 L548,6.2 C547,4.8 546,4.4 545.4,4.4 L545,9 L546,13 L544.4,13.4 L543.4,10.4 L541.6,17.4 L540,17.2 L541.4,9.6 L541.6,4.4 C540.4,4.6 539,5.2 538.2,6.6 Z"/>
 <path d="M545,16 l1.6,0.4 l-0.4,1.8 l-1.2,-0.6z"/>
</g>
<g fill="#b4b4bc">
 <path d="M552.6,6.6 L560,-1 L563,-1 L554.6,8.4 Z"/>
 <path d="M552,7.2 C554.6,8 555.6,10.6 554,13 C552.4,14.8 549,15 546.6,14.2 C548.6,13 548.6,11 549.4,9.4 C550,8 551,7 552,7.2 Z"/>
 <path d="M557.2,21 L562,21 L562,16.4 Z" fill="#7a7a80"/>
 <!-- pin -->
 <path d="M583.6,-1 L592,-1 L596.4,3.4 L594,5 L591.6,5.6 L591.6,11 C591.6,13 590,13.8 588.8,12.8 L580.4,3.6 C579.6,2.4 580.4,1.2 581.6,1.4 L584.4,2.2 Z"/>
 <path d="M586.4,9.2 L588.4,11.2 L579,17 L578,16.4 Z"/>
 <path d="M597.2,21 L602,21 L602,16.4 Z" fill="#7a7a80"/>
</g>
<!-- very dim puppet/3D icons -->
<g fill="#3a3a3c" stroke="#3a3a3c">
 <rect x="661" y="0" width="1" height="21" stroke="none"/><rect x="686" y="0" width="1" height="21.5" stroke="none"/>
 <rect x="663" y="22" width="22" height="1.4" stroke="none"/>
 <path d="M673.5,2 L673.5,9.5 L665.5,16 M673.5,9.5 L681.5,16" fill="none" stroke-width="2"/>
 <circle cx="673.5" cy="1.6" r="2.4" stroke="none"/>
 <rect x="663" y="13.6" width="5" height="4.6" stroke="none"/><rect x="679" y="13.6" width="5" height="4.6" stroke="none"/>
 <path d="M702,1 L702,6 M699.4,12 L694.6,15 M704.6,12 L709.6,15" fill="none" stroke-width="1.4"/>
 <ellipse cx="702" cy="9.5" rx="3.2" ry="3.6" fill="none" stroke-width="1.4"/>
 <rect x="699.6" y="-1" width="4.8" height="2.4" stroke="none"/>
 <rect x="692.2" y="13.2" width="4.6" height="4.4" stroke="none"/><rect x="707.8" y="13.2" width="4.6" height="4.4" stroke="none"/>
 <path d="M724,-0.5 L729,4 L740,-1 M729,4 L726,6.4 L726,16.6 L739.4,9.6 L739.4,-1 M732.6,8.4 L738,15" fill="none" stroke-width="1.4"/>
</g>
</svg>
<svg width="1920" height="28" viewBox="0 0 1920 28">
<!-- Encaixe checkbox -->
<rect x="766" y="-2" width="15.5" height="20.5" rx="1.5" fill="none" stroke="#8c8c8c" stroke-width="2"/>
<rect x="765" y="0" width="17.5" height="2.4" fill="#8c8c8c"/>
<!-- snapping icon -->
<path d="M858.6,18.4 L865,10.8 L871.4,18.4" fill="none" stroke="#aaaaaa" stroke-width="1.5"/>
<path d="M866.2,8 L870,3.6" fill="none" stroke="#8c8c8c" stroke-width="1.4" stroke-dasharray="1.3,1.1"/>
<path d="M869.4,-1 L875,-1 L875,6 C872.6,5.4 870.4,3 869.4,-1 Z" fill="#c8c8cc"/>
<!-- blue bounding icon -->
<g fill="none" stroke="#3a80d8" stroke-width="1.5">
 <path d="M889.6,3.4 L889.6,-0.4 L893,-0.4 M901.2,-0.4 L904.6,-0.4 L904.6,3.4"/>
 <path d="M889.6,12.6 L889.6,16.4 L893,16.4 M901.2,16.4 L904.6,16.4 L904.6,12.6"/>
 <path d="M892.4,3 L895,5.2 M901.8,3 L899.2,5.2 M892.4,13 L895,10.8 M901.8,13 L899.2,10.8"/>
</g>
<!-- fill / stroke swatches -->
<rect x="1040.4" y="-3" width="29.4" height="23.4" fill="none" stroke="#8c8c8c" stroke-width="1.5"/>
<rect x="1141.4" y="-3" width="29.6" height="23.4" fill="none" stroke="#8c8c8c" stroke-width="1.5"/>
<rect x="1187.5" y="10.4" width="5.4" height="1.6" fill="#3c70b8"/>
<!-- add play circle -->
<ellipse cx="1324" cy="9.4" rx="7.5" ry="8.4" fill="#b4b4bc"/>
<path d="M1321.6,5.2 L1328,9.4 L1321.6,13.6 Z" fill="#232323"/>
<!-- doc icon -->
<path d="M1357.4,-1 L1364.4,-1 L1365.4,1.2 L1375.6,1.2 L1375.6,18.4 L1357.4,18.4 Z" fill="#b4b4bc"/>
<path d="M1364.6,6.6 L1364.6,14 L1360.4,10.3 Z M1368.4,6.6 L1368.4,14 L1372.6,10.3 Z" fill="#232323"/>
<!-- checked checkbox -->
<rect x="1394.4" y="-2" width="17.6" height="21.6" rx="2" fill="#8a8a8a"/>
<path d="M1398,9.6 L1401.6,14 L1408.4,5.4" fill="none" stroke="#232323" stroke-width="1.6"/>
<!-- search magnifier -->
<ellipse cx="1688" cy="7.8" rx="5" ry="6" fill="none" stroke="#b8b8b8" stroke-width="1.5"/>
<path d="M1684.6,12.4 L1678.6,16.8" stroke="#b8b8b8" stroke-width="2" stroke-linecap="round"/>
</svg>
<style>
.ui{font-size:17.5px;}
</style>
<span class="t ui" style="left:788px;top:2px;color:#8e8e8e;transform:scaleX(0.749);">Encaixe</span>
<span class="t ui" style="left:940px;top:2px;color:#4685d0;transform:scaleX(0.782);text-shadow:0 0 1.5px #06204e,0 0 1px #06204e;">Preenchimento:</span>
<span class="t" style="left:1051px;top:-1.2px;font-size:22.5px;color:#bcbcbc;transform:scaleX(0.64);">?</span>
<span class="t ui" style="left:1085.4px;top:2px;color:#4685d0;transform:scaleX(0.769);text-shadow:0 0 1.5px #06204e,0 0 1px #06204e;">Traçado:</span>
<span class="t" style="left:1152.4px;top:-1.2px;font-size:22.5px;color:#bcbcbc;transform:scaleX(0.64);">?</span>
<span class="t ui" style="left:1199px;top:2px;color:#8a8a8a;transform:scaleX(0.798);">px</span>
<span class="t ui" style="left:1249.5px;top:2px;color:#8e8e8e;transform:scaleX(0.802);">Adicionar:</span>
<span class="t ui" style="left:1415.5px;top:2px;color:#8e8e8e;transform:scaleX(0.815);">Abrir painel automaticamente</span>
<span class="t ui" style="left:1707.4px;top:2px;color:#c8c8c8;transform:scaleX(0.7665);">Pesquisar ajuda</span>
<!-- ===== panel header ===== -->
<svg width="1920" height="104" viewBox="0 0 1920 104">
<path d="M14.2,45.8 L20,52.6 M20,45.8 L14.2,52.6" stroke="#8a8a8a" stroke-width="1.2" fill="none"/>
<rect x="32" y="39.5" width="13" height="13.5" fill="#aaaaae"/>
<!-- unlocked padlock -->
<rect x="58.8" y="44.6" width="10.8" height="8.6" fill="#b4b4b4"/>
<path d="M60.6,44.8 L60.6,42 C60.6,38.6 65.6,38.4 66,41.2" fill="none" stroke="#b4b4b4" stroke-width="1.5"/>
<path d="M64.2,46.6 a1.2,1.3 0 1,1 -0.01,0 M63.5,48.4 h1.4 v2.8 h-1.4z" fill="#232323"/>
<!-- hamburger -->
<rect x="290" y="43.8" width="10.6" height="1.7" fill="#a2a2a2"/>
<rect x="290" y="48.3" width="10.6" height="1.7" fill="#a2a2a2"/>
<rect x="290" y="52.8" width="10.6" height="1.7" fill="#a2a2a2"/>
<!-- breadcrumb chevrons -->
<path d="M128.2,78 L123.2,83.2 L128.2,88.4" fill="none" stroke="#9a9a9a" stroke-width="1.3"/>
<path d="M330.8,77.4 L326,82.6 L330.8,87.8" fill="none" stroke="#9a9a9a" stroke-width="1.3"/>
<!-- active crumb box -->
<rect x="337.5" y="73" width="154.5" height="21" fill="#1a1a1d"/>
<rect x="336.5" y="74" width="1" height="19" fill="#343434"/>
<rect x="338" y="94" width="154" height="1" fill="#383838"/>
</svg>
<span class="t ui" style="left:81.2px;top:40.5px;color:#dcdcdc;transform:scaleX(0.767);">Composição</span>
<span class="t ui" style="left:162px;top:40.5px;color:#4685d0;transform:scaleX(0.8006);text-shadow:0 0 1.5px #06204e,0 0 1px #06204e;">011_Gráficos After</span>
<span class="t ui" style="left:34.3px;top:75px;color:#8c8c8c;transform:scaleX(0.7952);">1920X1080</span>
<span class="t ui" style="left:146.5px;top:75px;color:#8c8c8c;transform:scaleX(0.739);">MUEVO - PROJETO FINAL</span>
<span class="t ui" style="left:349.3px;top:75.4px;color:#4685d0;transform:scaleX(0.7978);text-shadow:0 0 1.5px #06204e,0 0 1px #06204e;">011_Gráficos After</span>
<span class="t ui" style="left:1742px;top:139px;color:#dcdcdc;transform:scaleX(0.783);">Resolução adaptável (1/1)</span>
<!-- ===== composition viewer ===== -->
<svg width="1920" height="1080" viewBox="0 0 1920 1080">
<defs>
 <clipPath id="cl"><rect x="337" y="177" width="640" height="813"/></clipPath>
 <clipPath id="cr"><rect x="977" y="177" width="641" height="813"/></clipPath>
 <clipPath id="crr"><rect x="777" y="357" width="400" height="450" rx="52" ry="56"/></clipPath>
</defs>
<rect x="337" y="177" width="640" height="813" fill="#111111"/>
<rect x="977" y="177" width="641" height="812.5" fill="#ffffff"/>
<!-- frame lines on dark half -->
<g clip-path="url(#cl)" fill="none" stroke="#6e6e6e" stroke-width="1.7">
 <rect x="402" y="217.3" width="1151.6" height="732.4"/>
 <rect x="466" y="258.2" width="1023.5" height="650.8"/>
 <path d="M546,258.2 V909 M594,258.2 V909"/>
</g>
<!-- frame lines on white half -->
<g clip-path="url(#cr)" fill="none" stroke="#7a7a80" stroke-width="1.6">
 <rect x="402" y="217.3" width="1151.6" height="732.4"/>
 <rect x="466" y="258.2" width="1023.5" height="650.8"/>
 <path d="M1362.7,258.2 V909 M1410.7,258.2 V909"/>
 <path d="M1520,583 H1553" stroke="#a2a2b2" stroke-width="2"/>
</g>
<!-- selected layer bounds (left layer) -->
<g shape-rendering="crispEdges">
 <rect x="58" y="176" width="156" height="2" fill="#aeaeb6"/><rect x="58" y="178" width="156" height="1" fill="#54546a"/>
 <rect x="214" y="176" width="123" height="1" fill="#8a8a8a"/><rect x="214" y="177" width="123" height="1" fill="#787878"/><rect x="214" y="178" width="123" height="1" fill="#3e3e3e"/>
 <rect x="58" y="988" width="156" height="2" fill="#aeaeb6"/>
 <rect x="214" y="988" width="123" height="1" fill="#8a8a8a"/><rect x="214" y="989" width="123" height="1" fill="#6c6c6c"/>
 <rect x="52" y="183" width="2" height="176" fill="#aeaeb6"/>
 <rect x="52" y="359" width="1" height="626" fill="#8e8e94"/><rect x="53" y="359" width="1" height="626" fill="#6a6a70"/>
 <rect x="977.5" y="217" width="1.5" height="22" fill="#56565f"/>
 <rect x="977" y="949" width="1.5" height="1" fill="#56565f"/>
</g>
</svg>
<!-- ===== shape layer + handles ===== -->
<svg width="1920" height="1080" viewBox="0 0 1920 1080">
<rect x="777" y="356.2" width="400" height="451.3" rx="42" ry="48" fill="#555555"/>
<g clip-path="url(#crr)" stroke="#3b3b3b" stroke-width="1" shape-rendering="crispEdges">
<line x1="875.5" y1="356" x2="875.5" y2="808"/>
<line x1="977.5" y1="356" x2="977.5" y2="808"/>
<line x1="1077.5" y1="356" x2="1077.5" y2="808"/>
<line x1="777" y1="429.5" x2="1177" y2="429.5"/>
<line x1="777" y1="560.5" x2="1177" y2="560.5"/>
<line x1="777" y1="622.5" x2="1177" y2="622.5"/>
<line x1="777" y1="684.5" x2="1177" y2="684.5"/>
<line x1="777" y1="748.5" x2="1177" y2="748.5"/>
</g>
<line x1="270" y1="583" x2="508" y2="583" stroke="#66666c" stroke-width="1.3"/>
<circle cx="333" cy="583" r="1.6" fill="#a8a8ac"/>
<circle cx="365" cy="583" r="1.6" fill="#a8a8ac"/>
<circle cx="389" cy="583" r="1.6" fill="#a8a8ac"/>
<circle cx="408" cy="583" r="1.6" fill="#a8a8ac"/>
<circle cx="424" cy="583" r="1.6" fill="#a8a8ac"/>
<circle cx="437" cy="583" r="1.6" fill="#a8a8ac"/>
<circle cx="448" cy="583" r="1.6" fill="#a8a8ac"/>
<circle cx="458" cy="583" r="1.6" fill="#a8a8ac"/>
<circle cx="467" cy="583" r="1.6" fill="#a8a8ac"/>
<circle cx="474" cy="583" r="1.6" fill="#a8a8ac"/>
<circle cx="481" cy="583" r="1.6" fill="#a8a8ac"/>
<circle cx="487" cy="583" r="1.6" fill="#a8a8ac"/>
<circle cx="492" cy="583" r="1.6" fill="#a8a8ac"/>
<circle cx="496.5" cy="583" r="1.6" fill="#a8a8ac"/>
<circle cx="500.5" cy="583" r="1.6" fill="#a8a8ac"/>
<circle cx="504" cy="583" r="1.6" fill="#a8a8ac"/>
<rect x="259.8" y="577.6" width="10" height="11.4" fill="none" stroke="#c0c0c8" stroke-width="1.1"/>
<rect x="263.2" y="581.8" width="2.4" height="2.6" fill="#b0b0b8"/>
<g fill="#c6c6d2" stroke="#c6c6d2" transform="translate(515,582.8)"><path d="M-0.8,-12.6 L0.8,-12.6 L2.2,-7 L-2.2,-7 Z M-0.8,13 L0.8,13 L2.2,7 L-2.2,7 Z M-11.6,-0.8 L-11.6,0.8 L-6,2.2 L-6,-2.2 Z M11.6,-0.8 L11.6,0.8 L6,2.2 L6,-2.2 Z" stroke-width="0.8" stroke-linejoin="round"/><ellipse cx="0" cy="0" rx="5.2" ry="5.8" fill="none" stroke-width="3"/><circle r="1.4" fill="#9a9aa0" stroke="none"/></g>
<rect x="976" y="363" width="3" height="210" fill="#5c4441"/>
<rect x="976" y="385" width="3" height="2" fill="#8e4c3e"/>
<rect x="976" y="408" width="3" height="2" fill="#8e4c3e"/>
<rect x="976" y="438" width="3" height="2" fill="#8e4c3e"/>
<rect x="976" y="461" width="3" height="2" fill="#8e4c3e"/>
<rect x="976" y="482" width="3" height="2" fill="#8e4c3e"/>
<rect x="976" y="497" width="3" height="2" fill="#8e4c3e"/>
<rect x="976" y="508" width="3" height="2" fill="#8e4c3e"/>
<rect x="976" y="518" width="3" height="2" fill="#8e4c3e"/>
<rect x="976" y="527" width="3" height="2" fill="#8e4c3e"/>
<rect x="976" y="535" width="3" height="2" fill="#8e4c3e"/>
<rect x="976" y="542" width="3" height="2" fill="#8e4c3e"/>
<rect x="976" y="549" width="3" height="2" fill="#8e4c3e"/>
<rect x="976" y="555" width="3" height="2" fill="#8e4c3e"/>
<rect x="976" y="560" width="3" height="2" fill="#8e4c3e"/>
<rect x="976" y="565" width="3" height="2" fill="#8e4c3e"/>
<rect x="978" y="279" width="1" height="74" fill="#f3d9d5"/>
<path d="M977,266.9 H973.1 V278.2 H977" fill="none" stroke="#8a3528" stroke-width="1.2"/>
<path d="M977,266.9 H983.2 V278.2 H977" fill="none" stroke="#a88c8c" stroke-width="1.2"/>
<rect x="977" y="268" width="5.4" height="9.4" fill="#ececf0"/>
<rect x="976" y="270.6" width="2" height="3" fill="#7a3024"/>
<rect x="679.5" y="581.8" width="92" height="2.4" fill="#6c3327"/>
<rect x="782" y="582.2" width="185" height="1.6" fill="#6a4a44"/>
<rect x="796" y="581.6" width="2.6" height="2.2" fill="#8a4a3c"/>
<rect x="824" y="581.6" width="2.6" height="2.2" fill="#8a4a3c"/>
<rect x="847" y="581.6" width="2.6" height="2.2" fill="#8a4a3c"/>
<rect x="867" y="581.6" width="2.6" height="2.2" fill="#8a4a3c"/>
<rect x="883" y="581.6" width="2.6" height="2.2" fill="#8a4a3c"/>
<rect x="897" y="581.6" width="2.6" height="2.2" fill="#8a4a3c"/>
<rect x="909" y="581.6" width="2.6" height="2.2" fill="#8a4a3c"/>
<rect x="919" y="581.6" width="2.6" height="2.2" fill="#8a4a3c"/>
<rect x="928" y="581.6" width="2.6" height="2.2" fill="#8a4a3c"/>
<rect x="936" y="581.6" width="2.6" height="2.2" fill="#8a4a3c"/>
<rect x="943" y="581.6" width="2.6" height="2.2" fill="#8a4a3c"/>
<rect x="949" y="581.6" width="2.6" height="2.2" fill="#8a4a3c"/>
<rect x="954" y="581.6" width="2.6" height="2.2" fill="#8a4a3c"/>
<rect x="958" y="581.6" width="2.6" height="2.2" fill="#8a4a3c"/>
<rect x="962" y="581.6" width="2.6" height="2.2" fill="#8a4a3c"/>
<path d="M756,583 l2.6,-1.8 v3.6z" fill="#9a5042"/>
<rect x="669.1" y="578.1" width="9.6" height="11.7" fill="none" stroke="#8a4638" stroke-width="1.3"/>
<rect x="671.6" y="582" width="3" height="2" fill="#8a3a2c"/>
<rect x="783" y="452.6" width="391" height="1" fill="#6a5452"/>
<rect x="783" y="453.4" width="391" height="1.8" fill="#b87272"/>
<rect x="783" y="455.2" width="391" height="0.9" fill="#8c4840"/>
<rect x="800" y="663" width="355" height="2" fill="#757055"/>
<path d="M777.6,510 C782.6,550 840,673 975,663 C1112,673 1171.6,550 1176.6,510" fill="none" stroke="#3cbc48" stroke-width="2.8"/>
<rect x="48" y="172" width="10" height="11.2" fill="#b4b4be"/>
<rect x="510.5" y="172" width="10" height="11.2" fill="#b4b4be"/>
<rect x="973" y="172" width="10" height="11.2" fill="#b4b4be"/>
<rect x="48" y="577.4" width="10" height="11.2" fill="#b4b4be"/>
<rect x="48" y="984.4" width="10" height="11.2" fill="#b4b4be"/>
<rect x="510.5" y="984.4" width="10" height="11.2" fill="#b4b4be"/>
<rect x="973" y="984.4" width="10" height="11.2" fill="#b4b4be"/>
<rect x="772.9" y="351.9" width="10.2" height="11.6" fill="#b4b4be"/>
<rect x="972.9" y="351.9" width="10.2" height="11.6" fill="#b4b4be"/>
<rect x="1173.9" y="351.9" width="10.2" height="11.6" fill="#b4b4be"/>
<rect x="772.9" y="449.6" width="10.2" height="11.6" fill="#b4b4be"/>
<rect x="1173.9" y="449.6" width="10.2" height="11.6" fill="#b4b4be"/>
<rect x="772.9" y="803" width="10.2" height="11.6" fill="#b4b4be"/>
<rect x="972.9" y="803" width="10.2" height="11.6" fill="#b4b4be"/>
<rect x="1173.9" y="803" width="10.2" height="11.6" fill="#b4b4be"/>
<rect x="977" y="352.4" width="1" height="11" fill="#7a7a84"/>
<rect x="1183" y="353" width="1.2" height="11" fill="#8a8a96" opacity="0.7"/>
<rect x="771.3" y="499.6" width="10" height="11.4" fill="#6c88c8"/>
<rect x="780.1" y="499.6" width="1.2" height="11.4" fill="#4a76c4"/>
<rect x="1174" y="499.6" width="10" height="11.4" fill="#6c88c8"/>
<rect x="1182.8" y="499.6" width="1.2" height="11.4" fill="#4a76c4"/>
<rect x="771.3" y="578.8" width="10" height="11.4" fill="#6c88c8"/>
<rect x="780.1" y="578.8" width="1.2" height="11.4" fill="#4a76c4"/>
<rect x="1174" y="578.8" width="10" height="11.4" fill="#6c88c8"/>
<rect x="1182.8" y="578.8" width="1.2" height="11.4" fill="#4a76c4"/>
<rect x="771.3" y="658.1" width="10" height="11.4" fill="#6c88c8"/>
<rect x="780.1" y="658.1" width="1.2" height="11.4" fill="#4a76c4"/>
<rect x="1174" y="658.1" width="10" height="11.4" fill="#6c88c8"/>
<rect x="1182.8" y="658.1" width="1.2" height="11.4" fill="#4a76c4"/>
<rect x="771.3" y="577.8" width="11" height="13" fill="#6c88c8"/><rect x="772" y="577.8" width="10.3" height="1.2" fill="#a4b6e0"/><rect x="771.3" y="584" width="9" height="1.2" fill="#4a6cb4"/><rect x="781" y="578.6" width="1.3" height="12" fill="#8a8a92"/>
<rect x="972" y="499.8" width="11" height="11" fill="#6c88c8"/><rect x="976.6" y="499.8" width="1.4" height="11" fill="#4a5a8a"/>
<rect x="789.3" y="652" width="11" height="24" fill="#6c88c8"/>
<rect x="799.1" y="652" width="1.2" height="24" fill="#4a76c4"/>
<rect x="790.3" y="669" width="9" height="1.2" fill="#3a64a8"/>
<rect x="1154.3" y="652" width="11" height="24" fill="#6c88c8"/>
<rect x="1164.1" y="652" width="1.2" height="24" fill="#4a76c4"/>
<rect x="1155.3" y="669" width="9" height="1.2" fill="#3a64a8"/>
<rect x="969.4" y="652" width="12.4" height="24" fill="#6c88c8"/>
<g fill="#b4bedc" stroke="#b4bedc" transform="translate(975.3,662.6)"><path d="M-0.8,-12.6 L0.8,-12.6 L2.2,-7 L-2.2,-7 Z M-0.8,13 L0.8,13 L2.2,7 L-2.2,7 Z M-11.6,-0.8 L-11.6,0.8 L-6,2.2 L-6,-2.2 Z M11.6,-0.8 L11.6,0.8 L6,2.2 L6,-2.2 Z" stroke-width="0.8" stroke-linejoin="round"/><ellipse cx="0" cy="0" rx="5.2" ry="5.8" fill="none" stroke-width="3"/><circle r="2.2" fill="#5878c0" stroke="none"/></g>
<g transform="translate(977.7,454.8)">
<path d="M-7,-3.4 L-12.2,0 L-7,3.4 Z M7,-3.4 L11.6,0 L7,3.4 Z M-2.4,-7.5 L-1.4,-12.8 L1.4,-12.8 L2.4,-7.5 Z M-2.4,8 L-1.2,13.4 L1.2,13.4 L2.4,8 Z" fill="#d4d4e2"/>
<rect x="-7.6" y="-8" width="16" height="17.2" fill="#c4c4ce"/>
<rect x="7.8" y="-7" width="1" height="16.6" fill="#44444c"/><rect x="-6.8" y="9.2" width="15.4" height="0.8" fill="#44444c"/>
<ellipse cx="0" cy="0" rx="6.4" ry="7.2" fill="#d2d2e2" stroke="#dcdcf0" stroke-width="1.6"/>
<ellipse cx="-0.4" cy="0" rx="3" ry="3.6" fill="#c6c6d6" stroke="#8e8e9c" stroke-width="1.2"/>
<rect x="-0.3" y="-7" width="1" height="15" fill="#a0a0ae"/>
<path d="M-0.4,7 l2.8,1.6 l-2.4,1.8 z" fill="#b4503c"/>
</g>
<rect x="989.3" y="577.8" width="11.4" height="12.4" rx="2" fill="#874a3c"/>
<rect x="1006.3" y="577.8" width="11.4" height="12.4" rx="2" fill="#874a3c"/>
<rect x="972.9" y="596.4" width="11.4" height="12.4" rx="2" fill="#874a3c"/>
<rect x="1006.3" y="596.4" width="11.4" height="12.4" rx="2" fill="#874a3c"/>
<rect x="972.9" y="615.6" width="11.4" height="12.4" rx="2" fill="#874a3c"/>
<rect x="989.3" y="615.6" width="11.4" height="12.4" rx="2" fill="#874a3c"/>
<rect x="1006.3" y="615.6" width="11.4" height="12.4" rx="2" fill="#874a3c"/>
<path d="M978.6,596 V628 M1012,578 V628 M984,621.8 H1018 M989,584 H1018" stroke="#874a3c" stroke-width="2" fill="none"/>
<rect x="991.4" y="580.1" width="7.2" height="7.4" fill="#e24a20"/>
<rect x="1008.6" y="580.1" width="6.8" height="7.4" fill="#e24a20"/>
<rect x="976" y="598.7" width="5.2" height="7.4" fill="#e24a20"/>
<rect x="1008.8" y="598.7" width="6.4" height="7.4" fill="#e24a20"/>
<rect x="976" y="617.9" width="5.2" height="7.4" fill="#e24a20"/>
<rect x="991.4" y="617.9" width="7.2" height="7.4" fill="#e24a20"/>
<rect x="1008.8" y="617.9" width="6.4" height="7.4" fill="#e24a20"/>
<g fill="#e8d4d0" stroke="#d8a696" transform="translate(977.1,582.7)"><path d="M-0.8,-12.6 L0.8,-12.6 L2.2,-7 L-2.2,-7 Z M-0.8,13 L0.8,13 L2.2,7 L-2.2,7 Z M-11.6,-0.8 L-11.6,0.8 L-6,2.2 L-6,-2.2 Z M11.6,-0.8 L11.6,0.8 L6,2.2 L6,-2.2 Z" stroke-width="0.8" stroke-linejoin="round"/><ellipse cx="0" cy="0" rx="5.2" ry="5.8" fill="none" stroke-width="3"/><circle r="2.4" fill="#a04a38" stroke="none"/><circle r="1" cx="1.2" fill="#f05020" stroke="none"/></g>
</svg>
<!-- ===== viewer footer ===== -->
<div class="abs" style="left:2px;top:1046px;width:1916px;height:2px;background:#1a1a1a;"></div>
<svg width="1920" height="1080" viewBox="0 0 1920 1080">
<g fill="none" stroke="#303030" stroke-width="1">
 <rect x="6.5" y="1050.5" width="86.5" height="27" rx="3.5"/>
 <rect x="106.5" y="1050.5" width="108" height="27" rx="3.5"/>
 <rect x="555.5" y="1050.5" width="86.5" height="27" rx="3.5"/>
</g>
<g fill="#393939">
 <rect x="99.5" y="1053" width="1.5" height="20"/><rect x="220.5" y="1053" width="1.5" height="20"/>
 <rect x="370.5" y="1053" width="1.5" height="20"/><rect x="480" y="1053" width="1.5" height="20"/>
 <rect x="548.5" y="1053" width="1.5" height="20"/><rect x="648.5" y="1053" width="1.5" height="20"/>
</g>
<path d="M77.4,1060.6 L81.8,1065.6 L86.2,1060.6 M198.4,1060.6 L202.8,1065.6 L207.2,1060.6" fill="none" stroke="#c0c0c0" stroke-width="1.5"/>
<!-- fast preview -->
<path d="M243,1070.8 H233.8 V1054.9 H249.4 V1064.4" fill="none" stroke="#a8a8a8" stroke-width="1.4" stroke-linejoin="round"/>
<path d="M242.8,1056.6 L238.6,1063.4 L241.4,1063.4 L239.8,1069 L244.8,1061.6 L242,1061.6 L244,1056.6 Z" fill="#b4b4b4"/>
<path d="M244,1067 L250,1067 L247,1071 Z" fill="#c0c0c0"/>
<!-- transparency grid -->
<rect x="260.7" y="1056.2" width="16.2" height="14.8" fill="#2c2c2c" stroke="#a0a0a0" stroke-width="1.4"/>
<g fill="#7c7c7c">
 <rect x="265" y="1057" width="3.6" height="3.4"/><rect x="272" y="1057" width="3.6" height="3.4"/>
 <rect x="261.6" y="1061.4" width="3.4" height="4"/><rect x="268.6" y="1061.4" width="3.4" height="4"/><rect x="275" y="1061.4" width="1.4" height="4"/>
 <rect x="265" y="1066.4" width="3.6" height="3.8"/><rect x="272" y="1066.4" width="3.6" height="3.8"/>
</g>
<!-- mask/shape path toggle (active) -->
<rect x="284" y="1050.5" width="25" height="26" rx="2" fill="#19191c"/>
<path d="M295.8,1055.8 L304.4,1055.8 L304.4,1070 L289.2,1070 L289.2,1063 Z" fill="none" stroke="#3b7fd2" stroke-width="1.5"/>
<g fill="#3b86e0"><rect x="294.6" y="1054.4" width="2.6" height="2.6"/><rect x="303" y="1054.4" width="2.6" height="2.6"/><rect x="303" y="1061.6" width="2.6" height="2.6"/><rect x="303" y="1068.6" width="2.6" height="2.6"/><rect x="288" y="1068.6" width="2.6" height="2.6"/><rect x="288" y="1061.8" width="2.6" height="2.6"/></g>
<!-- title/action safe -->
<rect x="315.8" y="1055.2" width="16.6" height="15.8" rx="1.5" fill="none" stroke="#9a9a9a" stroke-width="1.7"/>
<rect x="320.5" y="1060" width="9" height="7" fill="#b4b4bc"/>
<!-- region of interest -->
<rect x="342.4" y="1054.6" width="16.4" height="13.6" fill="none" stroke="#8a8a8a" stroke-width="1.5"/>
<path d="M350.6,1053 V1058 M350.6,1065 V1070 M341.4,1061.4 H346 M355,1061.4 H360" stroke="#9a9a9a" stroke-width="1.4"/>
<rect x="349.4" y="1060.2" width="2.4" height="2.4" fill="#9a9a9a"/>
<path d="M353,1070 L359.6,1070 L356.3,1074 Z" fill="#c0c0c0"/>
<!-- RGB -->
<ellipse cx="387.2" cy="1064" rx="3.6" ry="3.9" fill="#3ab83c"/>
<ellipse cx="394.4" cy="1064" rx="3.6" ry="3.9" fill="#3a8ae8"/>
<ellipse cx="391" cy="1057.6" rx="3.6" ry="3.9" fill="#e04a1e"/>
<path d="M393,1070 L399.6,1070 L396.3,1074 Z" fill="#c0c0c0"/>
<!-- aperture -->
<ellipse cx="419.5" cy="1063" rx="5.4" ry="6.2" fill="none" stroke="#a8a8a8" stroke-width="5.2"/>
<g stroke="#232323" stroke-width="1" fill="none">
 <path d="M419.5,1054 L422,1060 M427.5,1060 L422,1062 M425,1070 L419.6,1066 M416,1071.6 L417,1065 M411.5,1064 L417,1060.4 M414,1055.6 L419.8,1059.4"/>
</g>
<!-- snapshot camera -->
<path d="M493,1058.4 L497.4,1058.4 L499,1055.2 L505,1055.2 L506.6,1058.4 L511,1058.4 L511,1071.4 L493,1071.4 Z" fill="#b4b4bc"/>
<ellipse cx="502" cy="1064.4" rx="3.3" ry="3.6" fill="none" stroke="#2a2a2a" stroke-width="1.5"/>
<!-- show snapshot (dim) -->
<g fill="#3e3e40">
 <path d="M519,1064.8 C523,1058 531,1058 535,1064.8 C531,1071.6 523,1071.6 519,1064.8 Z"/>
 <path d="M527,1058 L527,1054.6 L530,1054.6 L531.4,1052.4 L535.4,1052.4 L536.6,1054.6 L538,1054.6 L538,1060.6 L533,1060.6 Z"/>
</g>
<ellipse cx="527" cy="1064.8" rx="2.4" ry="2.8" fill="#232323"/>
</svg>
<span class="t ui" style="left:14.4px;top:1055.2px;color:#a8a8a8;transform:scaleX(0.772);">33,3%</span>
<span class="t ui" style="left:116px;top:1056.5px;color:#a8a8a8;transform:scaleX(0.808);">Máxima</span>
<span class="t ui" style="left:435.8px;top:1055.7px;color:#3a7ad0;transform:scaleX(0.758);text-shadow:0 0 1.5px #06204e,0 0 1px #06204e;">+0,0</span>
<span class="t ui" style="left:566px;top:1055.3px;color:#7c7c7c;transform:scaleX(0.78);">0:00:01:04</span>
</body>
</html>
